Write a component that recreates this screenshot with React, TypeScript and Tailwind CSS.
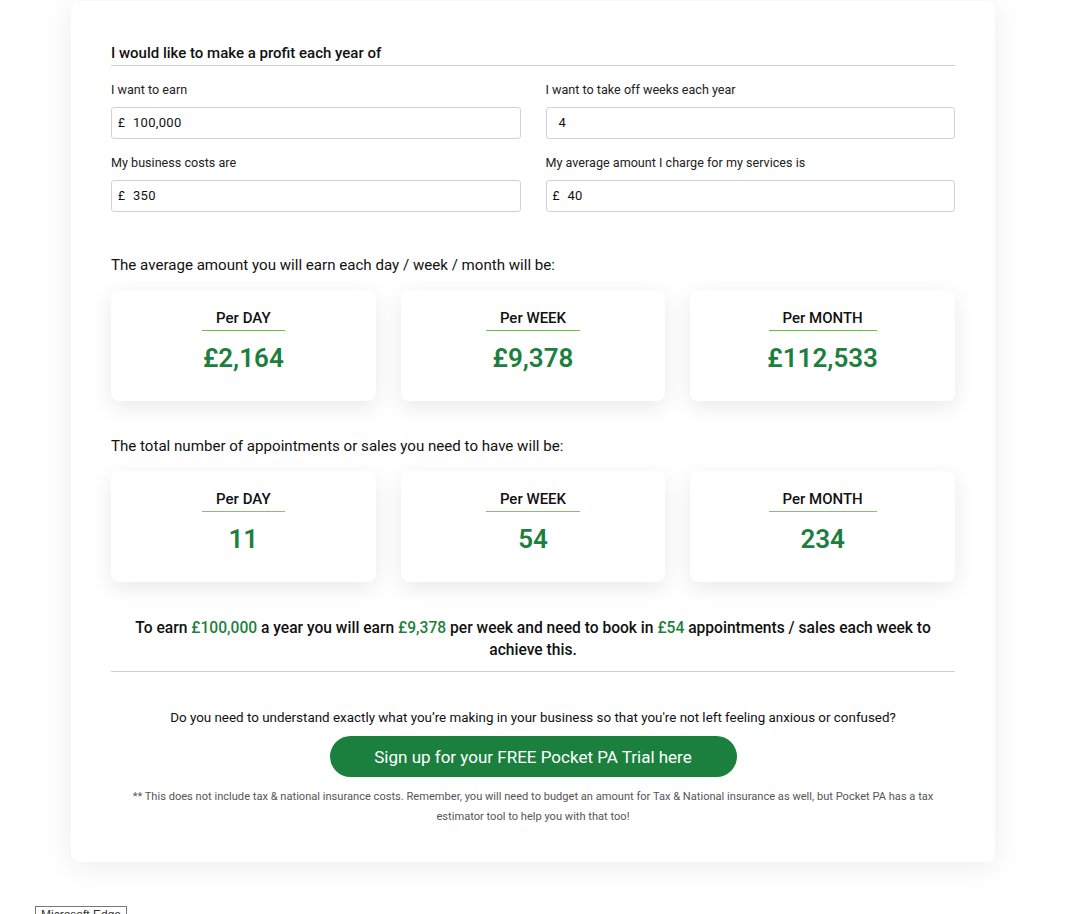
import React from 'react'

const green = 'text-[#1c7f3e]'

function Field({ label, value, pound = true }: { label: string; value: string; pound?: boolean }) {
  return (
    <div className="flex flex-col">
      <label className="text-[12.6px] leading-[18px] text-[#222] mb-[8px]">{label}</label>
      <div className="h-[32px] border border-[#cfd3d8] rounded-[3px] flex items-center pl-[6px] text-[13px] text-[#111]">
        {pound ? <span className="w-[15px] text-[12px]">£</span> : <span className="w-[6px]" />}
        <span className="tracking-[0.3px]">{value}</span>
      </div>
    </div>
  )
}

function StatCard({ label, value, line }: { label: string; value: string; line: string }) {
  return (
    <div className="h-[111px] bg-white rounded-[8px] shadow-[0_6px_22px_rgba(0,0,0,0.09)] flex flex-col items-center pt-[19px]">
      <div className={`text-[15px] leading-[18px] font-medium text-[#111] px-[14px] pb-[3px] border-b ${line}`}>{label}</div>
      <div className={`mt-[11px] text-[26px] leading-[32px] font-semibold ${green}`}>{value}</div>
    </div>
  )
}

export default function App() {
  const money = [
    { label: 'Per DAY', value: '£2,164' },
    { label: 'Per WEEK', value: '£9,378' },
    { label: 'Per MONTH', value: '£112,533' },
  ]
  const appts = [
    { label: 'Per DAY', value: '11' },
    { label: 'Per WEEK', value: '54' },
    { label: 'Per MONTH', value: '234' },
  ]

  return (
    <div className="min-h-screen bg-white font-['Roboto',sans-serif] text-[#111]">
      <div className="ml-[71px] w-[924px] pt-[1px]">
        <div className="bg-white rounded-[8px] shadow-[0_4px_30px_rgba(0,0,0,0.08)] px-[40px] pt-[43px] pb-[35px]">
          <h2 className="text-[15px] leading-[18px] font-medium text-[#111] pb-[3px] border-b border-[#cfcfcf]">
            I would like to make a profit each year of
          </h2>

          <div className="grid grid-cols-2 gap-x-[25px] gap-y-[15px] mt-[15px]">
            <Field label="I want to earn" value="100,000" />
            <Field label="I want to take off weeks each year" value="4" pound={false} />
            <Field label="My business costs are" value="350" />
            <Field label="My average amount I charge for my services is" value="40" />
          </div>

          <p className="mt-[44px] text-[15.1px] leading-[18px] text-[#111]">
            The average amount you will earn each day / week / month will be:
          </p>
          <div className="grid grid-cols-3 gap-[25px] mt-[16px]">
            {money.map((m) => (
              <StatCard key={m.label} label={m.label} value={m.value} line="border-[#6cbf45]" />
            ))}
          </div>

          <p className="mt-[36px] text-[15.1px] leading-[18px] text-[#111]">
            The total number of appointments or sales you need to have will be:
          </p>
          <div className="grid grid-cols-3 gap-[25px] mt-[16px]">
            {appts.map((m) => (
              <StatCard key={m.label} label={m.label} value={m.value} line="border-[#8fb97a]" />
            ))}
          </div>

          <div className="mt-[35px] pb-[10px] border-b border-[#cfcfcf] flex justify-center">
            <p className="max-w-[805px] text-center text-[15.6px] leading-[22px] font-medium text-[#111]">
              To earn <span className={green}>£100,000</span> a year you will earn <span className={green}>£9,378</span> per week and
              need to book in <span className={green}>£54</span> appointments / sales each week to achieve this.
            </p>
          </div>

          <div className="flex flex-col items-center mt-[38px]">
            <p className="text-[13.4px] leading-[16px] text-[#111] whitespace-nowrap">
              Do you need to understand exactly what you’re making in your business so that you're not left feeling anxious or confused?
            </p>
            <button className="mt-[10px] w-[407px] h-[41px] rounded-full bg-[#1b7f3d] text-white text-[17px] leading-[20px]">
              Sign up for your FREE Pocket PA Trial here
            </button>
            <p className="mt-[10px] max-w-[815px] text-center text-[11.1px] leading-[20px] text-[#555]">
              ** This does not include tax &amp; national insurance costs. Remember, you will need to budget an amount for Tax &amp; National insurance as well, but Pocket PA has a tax estimator tool to help you with that too!
            </p>
          </div>
        </div>
      </div>

      <div className="ml-[35px] mt-[44px] inline-block border border-[#777] bg-white px-[5px] text-[12px] leading-[16px] text-[#333] font-['Liberation_Sans',sans-serif]">
        Microsoft Edge
      </div>
    </div>
  )
}
